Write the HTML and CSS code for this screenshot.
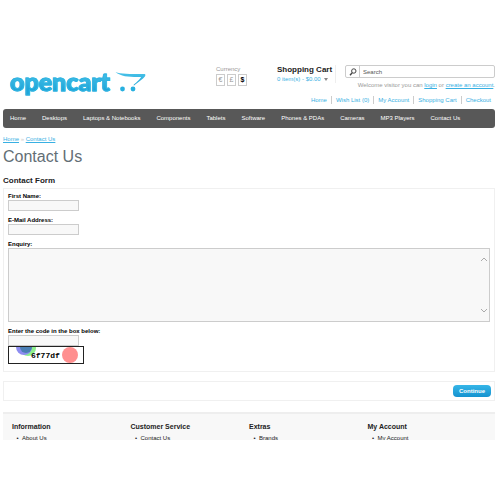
FILE: index.html
```html
<!DOCTYPE html>
<html lang="en">
<head>
  <meta charset="UTF-8">
  <title>Contact Us</title>
  <link rel="stylesheet" href="styles.css">
</head>
<body>
  <header class="header">
    <a class="logo" href="#">
      <span class="logo-text">opencart</span>
      <svg class="logo-cart" viewBox="0 0 32 22" aria-hidden="true">
        <defs>
          <linearGradient id="cartFill" x1="0" y1="0" x2="0" y2="1">
            <stop offset="0" stop-color="#4cc4ea"/>
            <stop offset="1" stop-color="#1fa5d8"/>
          </linearGradient>
        </defs>
        <path fill="url(#cartFill)" d="M0.500 1C6 3 14 3 29 3C31 3 31 5 28 7.500L19 14.500L18.500 14C22 11 25.500 7.500 26 6C17 6.200 6 6 0.500 1Z"/>
        <circle cx="7.500" cy="18" r="2.400" fill="#27b0e0"/>
        <circle cx="18" cy="18" r="2.400" fill="#27b0e0"/>
      </svg>
    </a>
    <div class="currency">
      <span>Currency</span>
      <div class="currency-list">
        <button type="button">€</button>
        <button type="button">£</button>
        <button type="button" class="active">$</button>
      </div>
    </div>
    <div class="cart">
      <h4>Shopping Cart</h4>
      <a href="#">0 item(s) - $0.00 <span class="arrow"></span></a>
    </div>
    <div class="account">
      <div class="search">
        <button type="button" aria-label="Search">
          <svg viewBox="0 0 8 8" aria-hidden="true">
            <circle cx="4.800" cy="3" r="2.200" fill="none" stroke="#444" stroke-width="1"/>
            <path d="M3.200 4.800L1 7.200" stroke="#444" stroke-width="1.400"/>
          </svg>
        </button>
        <input type="text" placeholder="Search" aria-label="Search">
      </div>
      <p class="welcome">Welcome visitor you can <a href="#">login</a> or <a href="#">create an account</a>.</p>
    </div>
  </header>

  <div class="links">
    <a href="#">Home</a>
    <a href="#">Wish List (0)</a>
    <a href="#">My Account</a>
    <a href="#">Shopping Cart</a>
    <a href="#">Checkout</a>
  </div>

  <nav class="menu">
    <a href="#">Home</a>
    <a href="#">Desktops</a>
    <a href="#">Laptops &amp; Notebooks</a>
    <a href="#">Components</a>
    <a href="#">Tablets</a>
    <a href="#">Software</a>
    <a href="#">Phones &amp; PDAs</a>
    <a href="#">Cameras</a>
    <a href="#">MP3 Players</a>
    <a href="#">Contact Us</a>
  </nav>

  <main>
    <div class="breadcrumb"><a href="#">Home</a> » <a href="#">Contact Us</a></div>
    <h1>Contact Us</h1>
    <form>
      <h2>Contact Form</h2>
      <div class="content">
        <div class="field">
          <label for="name">First Name:</label>
          <input type="text" id="name">
        </div>
        <div class="field">
          <label for="email">E-Mail Address:</label>
          <input type="text" id="email">
        </div>
        <div class="field">
          <label for="enquiry">Enquiry:</label>
          <div class="enquiry">
            <textarea id="enquiry"></textarea>
            <svg class="scroll-up" viewBox="0 0 8 5" aria-hidden="true"><path d="M1 4L4 1L7 4"/></svg>
            <svg class="scroll-down" viewBox="0 0 8 5" aria-hidden="true"><path d="M1 1L4 4L7 1"/></svg>
          </div>
        </div>
        <div class="field">
          <label for="captcha">Enter the code in the box below:</label>
          <input type="text" id="captcha">
          <svg class="captcha" viewBox="0 0 76 18" role="img" aria-label="Captcha">
            <rect width="76" height="18" fill="#fff"/>
            <circle cx="20" cy="2" r="8" fill="#8df08d"/>
            <circle cx="16" cy="1" r="8" fill="#8c8cf0"/>
            <circle cx="18" cy="1" r="6" fill="#4a7fb5"/>
            <circle cx="62" cy="9" r="8" fill="#ff8f8f"/>
            <text x="23" y="12">6f77df</text>
            <rect x="0.500" y="0.500" width="75" height="17" fill="none" stroke="#222"/>
          </svg>
        </div>
      </div>
      <div class="buttons">
        <button type="submit">Continue</button>
      </div>
    </form>
  </main>

  <footer class="footer">
    <div class="column">
      <h3>Information</h3>
      <ul><li><a href="#">About Us</a></li></ul>
    </div>
    <div class="column">
      <h3>Customer Service</h3>
      <ul><li><a href="#">Contact Us</a></li></ul>
    </div>
    <div class="column">
      <h3>Extras</h3>
      <ul><li><a href="#">Brands</a></li></ul>
    </div>
    <div class="column">
      <h3>My Account</h3>
      <ul><li><a href="#">My Account</a></li></ul>
    </div>
  </footer>
</body>
</html>
```
FILE: styles.css
```css
* {
  box-sizing: border-box;
}
body {
  margin: 0;
  padding: 65px 5px 0 3px;
  background: #fff;
  color: #222;
  font: 6px/8px "Liberation Sans", Arial, sans-serif;
}
h1, h2, h3, h4, p, ul {
  margin: 0;
  padding: 0;
}
a {
  color: #38b0e3;
}
button, input, textarea {
  font: inherit;
  margin: 0;
  padding: 0;
  border-radius: 0;
}

/* header */
.header {
  display: flex;
  height: 31px;
}
.logo {
  display: flex;
  flex: 1;
  gap: 5px;
  padding-left: 7px;
  text-decoration: none;
}
.logo-text {
  font: 900 25px/32px Lato, "Liberation Sans", sans-serif;
  background: linear-gradient(#4cc4ea 20%, #1fa5d8 80%);
  -webkit-background-clip: text;
  background-clip: text;
  -webkit-text-stroke: 1px #2fb4e2;
  color: transparent;
}
.logo-cart {
  width: 32px;
  height: 22px;
  margin-top: 6px;
}
.currency {
  width: 61px;
  color: #999;
}
.currency-list {
  display: flex;
  gap: 2px;
  margin-top: 1px;
}
.currency button {
  width: 9px;
  height: 12px;
  border: 1px solid #ccc;
  background: #fff;
  color: #999;
  font-size: 7px;
}
.currency .active {
  color: #000;
  font-weight: bold;
}
.cart {
  width: 59px;
  height: 18px;
  margin-right: 9px;
  border-right: 1px solid #eee;
  white-space: nowrap;
}
.cart h4 {
  font-size: 8px;
  line-height: 10px;
}
.cart a {
  text-decoration: none;
}
.arrow {
  display: inline-block;
  margin-left: 2px;
  border: 2px solid transparent;
  border-top: 3px solid #888;
  border-bottom: 0;
  vertical-align: middle;
}
.account {
  width: 150px;
}
.search {
  display: flex;
  height: 13px;
  border: 1px solid #ccc;
  border-radius: 2px;
}
.search button {
  display: grid;
  place-items: center;
  width: 14px;
  border: 0;
  border-right: 1px solid #ccc;
  background: none;
}
.search svg {
  width: 8px;
  height: 8px;
}
.search input {
  flex: 1;
  min-width: 0;
  padding-left: 3px;
  border: 0;
  background: none;
}
.search input::placeholder {
  color: #555;
}
.welcome {
  margin-top: 3px;
  color: #999;
  text-align: right;
  white-space: nowrap;
}
.links {
  display: flex;
  justify-content: flex-end;
  padding-right: 4px;
}
.links a {
  text-decoration: none;
}
.links a + a {
  margin-left: 4px;
  padding-left: 4px;
  border-left: 1px solid #ccc;
}

/* main menu */
.menu {
  display: flex;
  gap: 16px;
  margin-top: 5px;
  padding: 0 7px;
  border-radius: 3px;
  background: #585858;
  line-height: 19px;
}
.menu a {
  color: #fff;
  text-decoration: none;
  white-space: nowrap;
}

/* contact page */
.breadcrumb {
  margin-top: 7px;
  color: #ccc;
}
h1 {
  margin-top: 5px;
  color: #636e75;
  font-size: 16px;
  font-weight: normal;
  line-height: 18px;
}
h2 {
  margin: 10px 0 2px;
  font-size: 8px;
  line-height: 10px;
}
.content {
  display: flex;
  flex-direction: column;
  gap: 6px;
  padding: 4px 4px 7px;
  border: 1px solid #f0f0f0;
}
.field label {
  display: block;
  color: #000;
  font-weight: bold;
  line-height: 7px;
}
.field input {
  display: block;
  width: 71px;
  height: 11px;
  border: 1px solid #ccc;
  background: #f8f8f8;
}
.enquiry {
  position: relative;
}
.enquiry textarea {
  display: block;
  width: 100%;
  height: 74px;
  border: 1px solid #ccc;
  background: #f8f8f8;
  resize: none;
}
.enquiry svg {
  position: absolute;
  right: 2px;
  width: 8px;
  height: 5px;
  fill: none;
  stroke: #aaa;
  stroke-width: 1;
}
.scroll-up {
  top: 9px;
}
.scroll-down {
  bottom: 9px;
}
.captcha {
  display: block;
  width: 76px;
  height: 18px;
}
.captcha text {
  font: bold 8px "Liberation Mono", monospace;
}
.buttons {
  display: flex;
  justify-content: flex-end;
  margin: 9px 0 11px;
  padding: 3px;
  border: 1px solid #f0f0f0;
}
.buttons button {
  width: 38px;
  height: 12px;
  border: 0;
  border-radius: 4px;
  background: linear-gradient(#36b6e8, #1592cf);
  color: #fff;
  font-weight: bold;
}

/* footer */
.footer {
  display: grid;
  grid-template-columns: repeat(4, 1fr);
  height: 28px;
  padding: 9px 9px 0;
  overflow: hidden;
  border-top: 2px solid #eee;
  background: #f8f8f8;
}
.footer h3 {
  font-size: 7px;
  line-height: 8px;
}
.footer ul {
  padding-left: 10px;
  margin-top: 3px;
  list-style: "•\a0\a0";
}
.footer a {
  color: #222;
  text-decoration: none;
}
```
